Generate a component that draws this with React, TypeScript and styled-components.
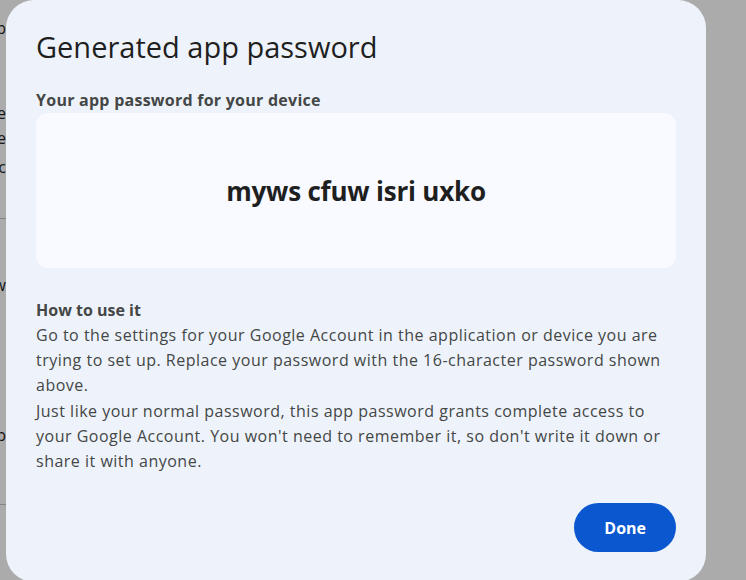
import React from "react";
import styled, { createGlobalStyle } from "styled-components";

const Global = createGlobalStyle`
  html, body { margin: 0; padding: 0; }
  body {
    width: 746px;
    height: 580px;
    overflow: hidden;
    background: #ffffff;
    font-family: "Open Sans", "Noto Sans", Arial, sans-serif;
  }
`;

const Page = styled.div`
  position: relative;
  width: 746px;
  height: 580px;
  overflow: hidden;
  background: #ffffff;
`;

const BackColumn = styled.div`
  display: flex;
  flex-direction: column;
  width: 300px;
  margin-left: -294px;
  padding-top: 16px;
  color: #1f1f1f;
  font-size: 16px;
  line-height: 25px;
  text-align: right;
`;

const BackLine = styled.div<{ $gap?: number }>`
  margin-top: ${(p) => p.$gap ?? 0}px;
  white-space: nowrap;
`;

const BackRule = styled.div<{ $gap: number }>`
  margin-top: ${(p) => p.$gap}px;
  height: 1px;
  background: #c4c7c5;
`;

const Scrim = styled.div`
  position: absolute;
  inset: 0;
  background: rgba(0, 0, 0, 0.33);
`;

const Dialog = styled.div`
  position: absolute;
  left: 6px;
  top: 0;
  width: 700px;
  height: 582px;
  box-sizing: border-box;
  padding: 29px 30px 28px 30px;
  background: #eef3fb;
  border-radius: 28px;
  display: flex;
  flex-direction: column;
`;

const Title = styled.h1`
  margin: 0;
  font-family: "Open Sans", "Noto Sans", Arial, sans-serif;
  font-weight: 400;
  font-size: 29px;
  line-height: 36px;
  color: #1f1f1f;
`;

const Label = styled.div`
  margin-top: 23px;
  font-size: 16px;
  line-height: 24px;
  font-weight: 700;
  letter-spacing: 0.25px;
  color: #444746;
`;

const PasswordBox = styled.div`
  margin-top: 1px;
  height: 155px;
  border-radius: 12px;
  background: #f8faff;
  display: flex;
  align-items: center;
  justify-content: center;
`;

const PasswordText = styled.div`
  font-size: 26px;
  font-weight: 700;
  color: #1f1f1f;
  letter-spacing: -0.2px;
`;

const Section = styled.div`
  margin-top: 30px;
  display: flex;
  flex-direction: column;
`;

const SectionTitle = styled.div`
  font-size: 16px;
  line-height: 25px;
  font-weight: 700;
  color: #444746;
`;

const Paragraph = styled.p`
  margin: 0;
  font-size: 16px;
  line-height: 25.2px;
  letter-spacing: 0.5px;
  color: #444746;
`;

const Actions = styled.div`
  margin-top: auto;
  display: flex;
  justify-content: flex-end;
  padding-bottom: 2px;
`;

const DoneButton = styled.button`
  height: 49px;
  padding: 0 30px;
  border: none;
  border-radius: 25px;
  background: #0b57d0;
  color: #ffffff;
  font-family: "Open Sans", "Noto Sans", Arial, sans-serif;
  font-size: 16px;
  font-weight: 700;
  cursor: pointer;
`;

export default function App() {
  return (
    <Page>
      <Global />
      <BackColumn aria-hidden="true">
        <BackLine>Help</BackLine>
        <BackLine $gap={60}>one</BackLine>
        <BackLine>are</BackLine>
        <BackLine $gap={4}>etc</BackLine>
        <BackRule $gap={38} />
        <BackLine $gap={54}>New</BackLine>
        <BackLine $gap={125}>ap</BackLine>
        <BackRule $gap={56} />
      </BackColumn>
      <Scrim />
      <Dialog>
        <Title>Generated app password</Title>
        <Label>Your app password for your device</Label>
        <PasswordBox>
          <PasswordText>myws cfuw isri uxko</PasswordText>
        </PasswordBox>
        <Section>
          <SectionTitle>How to use it</SectionTitle>
          <Paragraph>
            Go to the settings for your Google Account in the application or device you are
            trying to set up. Replace your password with the 16-character password shown
            above.
          </Paragraph>
          <Paragraph>
            Just like your normal password, this app password grants complete access to
            your Google Account. You won't need to remember it, so don't write it down or
            share it with anyone.
          </Paragraph>
        </Section>
        <Actions>
          <DoneButton>Done</DoneButton>
        </Actions>
      </Dialog>
    </Page>
  );
}
